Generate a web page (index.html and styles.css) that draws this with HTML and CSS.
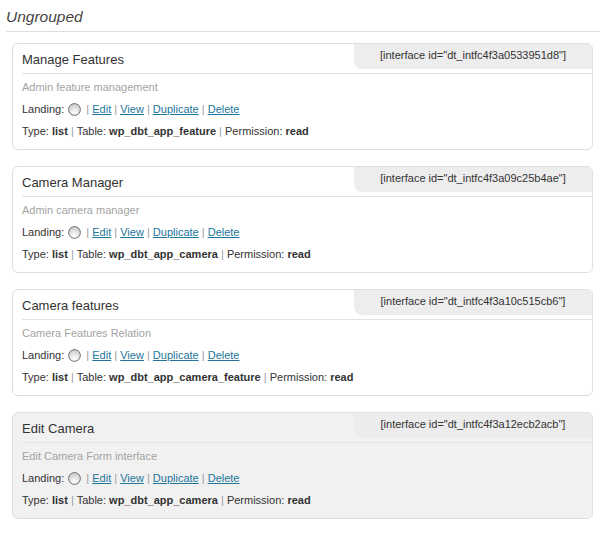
FILE: index.html
```html
<!DOCTYPE html>
<html>
<head>
<meta charset="utf-8">
<link rel="stylesheet" href="styles.css">
</head>
<body>
<div class="group">
  <h3 class="group-title">Ungrouped</h3>
  <div class="cards">
    <div class="card">
      <div class="card-head">
        <div class="card-title">Manage Features</div>
        <div class="shortcode">[interface id="dt_intfc4f3a0533951d8"]</div>
      </div>
      <div class="card-body">
        <div class="row desc">Admin feature management</div>
        <div class="row">Landing: <span class="radio"><svg width="13" height="13" viewBox="0 0 13 13"><defs><radialGradient id="rg1" cx="50%" cy="75%" r="65%"><stop offset="0" stop-color="#ffffff"/><stop offset="1" stop-color="#cfcfcf"/></radialGradient></defs><circle cx="6.5" cy="6.5" r="5.9" fill="url(#rg1)" stroke="#6f6f6f" stroke-width="1"/></svg></span> <span class="sep">|</span> <a href="#">Edit</a> <span class="sep">|</span> <a href="#">View</a> <span class="sep">|</span> <a href="#">Duplicate</a> <span class="sep">|</span> <a href="#">Delete</a></div>
        <div class="row">Type: <b>list</b> <span class="sep">|</span> Table: <b>wp_dbt_app_feature</b> <span class="sep">|</span> Permission: <b>read</b></div>
      </div>
    </div>
    <div class="card">
      <div class="card-head">
        <div class="card-title">Camera Manager</div>
        <div class="shortcode">[interface id="dt_intfc4f3a09c25b4ae"]</div>
      </div>
      <div class="card-body">
        <div class="row desc">Admin camera manager</div>
        <div class="row">Landing: <span class="radio"><svg width="13" height="13" viewBox="0 0 13 13"><defs><radialGradient id="rg2" cx="50%" cy="75%" r="65%"><stop offset="0" stop-color="#ffffff"/><stop offset="1" stop-color="#cfcfcf"/></radialGradient></defs><circle cx="6.5" cy="6.5" r="5.9" fill="url(#rg2)" stroke="#6f6f6f" stroke-width="1"/></svg></span> <span class="sep">|</span> <a href="#">Edit</a> <span class="sep">|</span> <a href="#">View</a> <span class="sep">|</span> <a href="#">Duplicate</a> <span class="sep">|</span> <a href="#">Delete</a></div>
        <div class="row">Type: <b>list</b> <span class="sep">|</span> Table: <b>wp_dbt_app_camera</b> <span class="sep">|</span> Permission: <b>read</b></div>
      </div>
    </div>
    <div class="card">
      <div class="card-head">
        <div class="card-title">Camera features</div>
        <div class="shortcode">[interface id="dt_intfc4f3a10c515cb6"]</div>
      </div>
      <div class="card-body">
        <div class="row desc">Camera Features Relation</div>
        <div class="row">Landing: <span class="radio"><svg width="13" height="13" viewBox="0 0 13 13"><defs><radialGradient id="rg3" cx="50%" cy="75%" r="65%"><stop offset="0" stop-color="#ffffff"/><stop offset="1" stop-color="#cfcfcf"/></radialGradient></defs><circle cx="6.5" cy="6.5" r="5.9" fill="url(#rg3)" stroke="#6f6f6f" stroke-width="1"/></svg></span> <span class="sep">|</span> <a href="#">Edit</a> <span class="sep">|</span> <a href="#">View</a> <span class="sep">|</span> <a href="#">Duplicate</a> <span class="sep">|</span> <a href="#">Delete</a></div>
        <div class="row">Type: <b>list</b> <span class="sep">|</span> Table: <b>wp_dbt_app_camera_feature</b> <span class="sep">|</span> Permission: <b>read</b></div>
      </div>
    </div>
    <div class="card card-active">
      <div class="card-head">
        <div class="card-title">Edit Camera</div>
        <div class="shortcode">[interface id="dt_intfc4f3a12ecb2acb"]</div>
      </div>
      <div class="card-body">
        <div class="row desc">Edit Camera Form interface</div>
        <div class="row">Landing: <span class="radio"><svg width="13" height="13" viewBox="0 0 13 13"><defs><radialGradient id="rg4" cx="50%" cy="75%" r="65%"><stop offset="0" stop-color="#ffffff"/><stop offset="1" stop-color="#cfcfcf"/></radialGradient></defs><circle cx="6.5" cy="6.5" r="5.9" fill="url(#rg4)" stroke="#6f6f6f" stroke-width="1"/></svg></span> <span class="sep">|</span> <a href="#">Edit</a> <span class="sep">|</span> <a href="#">View</a> <span class="sep">|</span> <a href="#">Duplicate</a> <span class="sep">|</span> <a href="#">Delete</a></div>
        <div class="row">Type: <b>list</b> <span class="sep">|</span> Table: <b>wp_dbt_app_camera</b> <span class="sep">|</span> Permission: <b>read</b></div>
      </div>
    </div>
  </div>
</div>
</body>
</html>
```
FILE: styles.css
```css
html, body {
  margin: 0;
  padding: 0;
  background: #ffffff;
}

body {
  font-family: "Liberation Sans", Arial, sans-serif;
  color: #333333;
}

.group-title {
  margin: 0 4px 0 6px;
  padding: 7px 0 4px;
  font-size: 15.5px;
  line-height: 20px;
  font-style: italic;
  font-weight: normal;
  color: #464646;
  border-bottom: 1px solid #dfdfdf;
}

.cards {
  display: flex;
  flex-direction: column;
  gap: 16px;
  margin: 11px 11px 0 12px;
}

.card {
  border: 1px solid #dfdfdf;
  border-radius: 6px;
  background: #ffffff;
}

.card-active {
  background: #f1f1f1;
}

.card-head {
  display: flex;
  justify-content: space-between;
  align-items: flex-start;
  height: 29px;
  margin-left: 9px;
  border-bottom: 1px solid #e3e3e3;
}

.card-title {
  padding-top: 7.5px;
  font-size: 13px;
  line-height: 16px;
  color: #333333;
}

.shortcode {
  width: 238px;
  height: 22px;
  padding-bottom: 3px;
  font-size: 11px;
  line-height: 22px;
  text-align: center;
  color: #333333;
  background: #ededed;
  border-top-right-radius: 5px;
  border-bottom-left-radius: 8px;
}

.card-active .shortcode {
  background: #ececec;
}

.card-body {
  padding: 2px 9px 7px;
}

.row {
  font-size: 11px;
  line-height: 22px;
  color: #333333;
  white-space: nowrap;
}

.row.desc {
  color: #a3a3a3;
}

.row b {
  font-weight: bold;
  color: #333333;
}

.row a {
  color: #21759b;
  text-decoration: underline;
}

.sep {
  color: #9a9a9a;
}

.radio {
  display: inline-block;
  width: 13px;
  height: 13px;
  margin: 0 2px 0 1px;
  vertical-align: -3px;
}

.radio svg {
  display: block;
}
```
